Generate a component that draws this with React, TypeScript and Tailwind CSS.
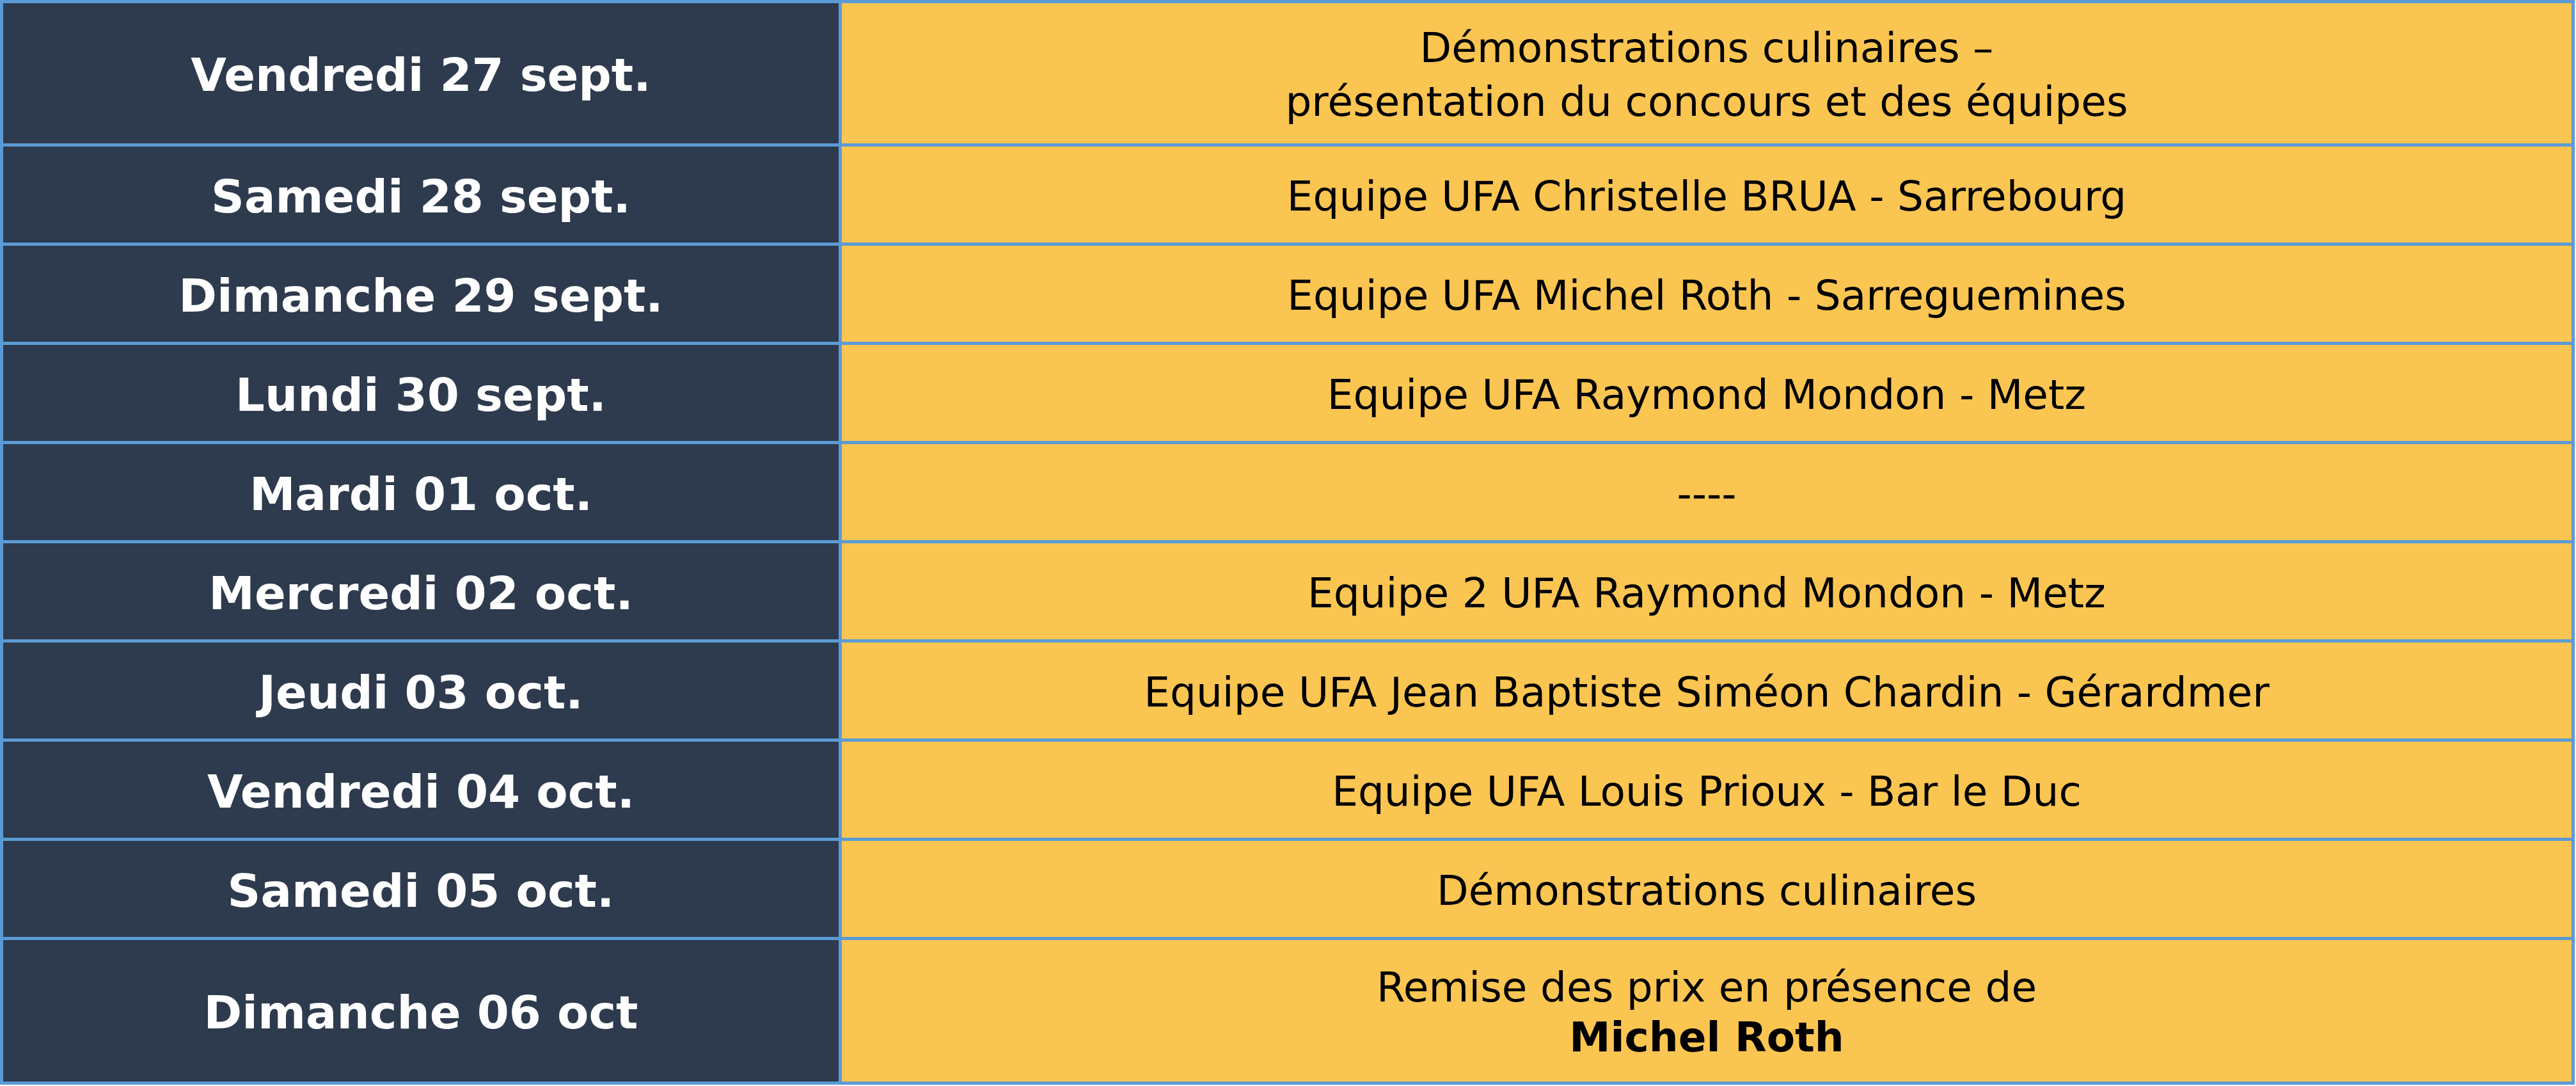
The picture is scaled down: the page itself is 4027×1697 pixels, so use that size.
import React from "react";

type Row = {
  day: string;
  lines: React.ReactNode;
  tall?: boolean;
};

const rows: Row[] = [
  {
    day: "Vendredi 27 sept.",
    lines: (
      <>
        <span>Démonstrations culinaires –</span>
        <span>présentation du concours et des équipes</span>
      </>
    ),
    tall: true,
  },
  { day: "Samedi 28 sept.", lines: "Equipe UFA Christelle BRUA - Sarrebourg" },
  { day: "Dimanche 29 sept.", lines: "Equipe UFA Michel Roth - Sarreguemines" },
  { day: "Lundi 30 sept.", lines: "Equipe UFA Raymond Mondon - Metz" },
  { day: "Mardi 01 oct.", lines: "----" },
  { day: "Mercredi 02 oct.", lines: "Equipe 2 UFA Raymond Mondon - Metz" },
  { day: "Jeudi 03 oct.", lines: "Equipe UFA Jean Baptiste Siméon Chardin - Gérardmer" },
  { day: "Vendredi 04 oct.", lines: "Equipe UFA Louis Prioux - Bar le Duc" },
  { day: "Samedi 05 oct.", lines: "Démonstrations culinaires" },
  {
    day: "Dimanche 06 oct",
    lines: (
      <>
        <span className="leading-[78px]">Remise des prix en présence de</span>
        <span className="font-bold leading-[78px]">Michel Roth</span>
      </>
    ),
    tall: true,
  },
];

const App: React.FC = () => {
  return (
    <div className="w-[4027px] h-[1697px] bg-white font-['DejaVu_Sans',Verdana,sans-serif]">
      <div className="w-[4025px] grid grid-cols-[1306px_1fr] gap-[5px] p-[5px] bg-[#5b9bd5]">
        {rows.map((row, i) => (
          <React.Fragment key={i}>
            <div
              className={`flex items-center justify-center pt-[5px] bg-[#2e3a4d] text-white font-bold text-[72px] leading-none ${
                row.tall ? (i === 0 ? "h-[219px]" : "h-[221px]") : "h-[150px]"
              }`}
            >
              {row.day}
            </div>
            <div className="flex flex-col items-center justify-center pt-[5px] bg-[#fbc552] text-black text-[64.5px] leading-[84px] text-center">
              {row.lines}
            </div>
          </React.Fragment>
        ))}
      </div>
    </div>
  );
};

export default App;
